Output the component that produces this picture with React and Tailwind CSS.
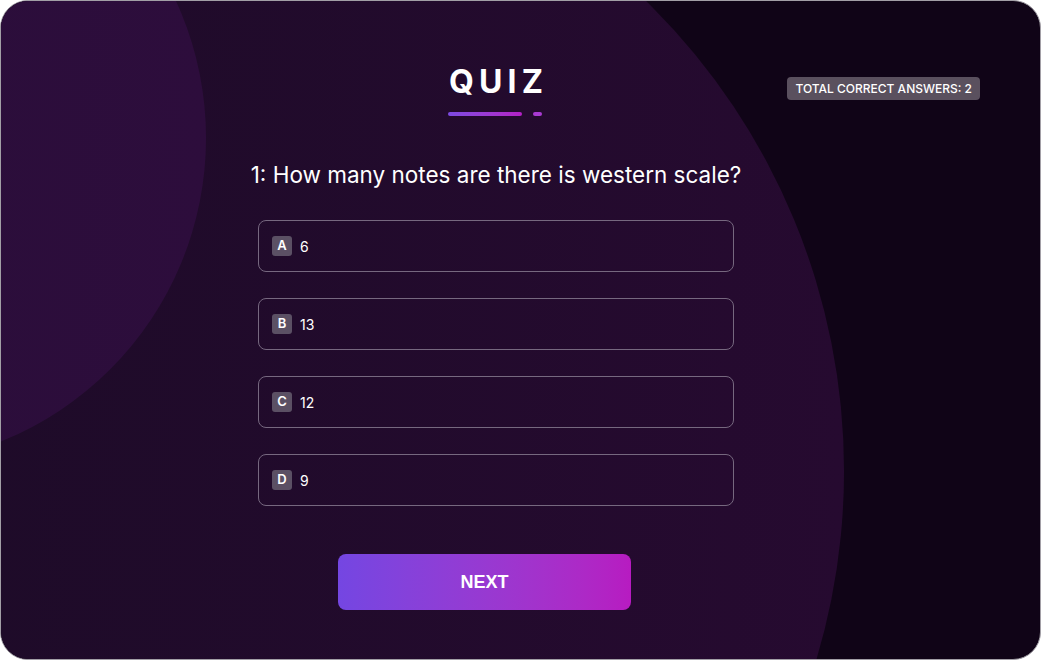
import React from 'react'

const options = [
  { key: 'A', text: '6' },
  { key: 'B', text: '13' },
  { key: 'C', text: '12' },
  { key: 'D', text: '9' },
]

export default function App() {
  return (
    <div className="w-[1041px] h-[660px] bg-white">
      <div
        className="relative w-[1041px] h-[660px] overflow-hidden rounded-[28px] border border-[#a29fa6] bg-[#100417]"
        style={{ fontFamily: 'Inter, "Noto Sans", sans-serif' }}
      >
        {/* background shapes */}
        <div className="absolute left-[-471px] top-[-187px] w-[1314px] h-[1314px] rounded-full bg-gradient-to-r from-[#1a0b25] to-[#260a30]" />
        <div className="absolute left-[-449px] top-[-190px] w-[654px] h-[654px] rounded-full bg-gradient-to-r from-[#280e38] to-[#2d0d3c]" />

        <div className="relative flex w-[990px] flex-col items-center pt-[61px]">
          <h1 className="text-[32px] font-bold leading-[40px] tracking-[0.16em] pl-[0.16em] text-white">QUIZ</h1>
          <div className="mt-[10px] flex items-center gap-[11px] pr-[2px]">
            <span className="h-[4px] w-[74px] rounded-full bg-gradient-to-r from-[#7c4ae2] to-[#b41ec6]" />
            <span className="h-[4px] w-[9px] rounded-full bg-[#a93ad2]" />
          </div>

          <h2 className="mt-[44px] text-[22.5px] font-normal leading-[30px] text-white">
            1: How many notes are there is western scale?
          </h2>

          <div className="mt-[30px] flex flex-col gap-[26px]">
            {options.map((o) => (
              <div
                key={o.key}
                className="flex h-[52px] w-[476px] items-center gap-[8px] rounded-[8px] border border-[#76687f] px-[13px]"
              >
                <span className="flex h-[20px] w-[20px] items-center justify-center rounded-[3px] bg-[#5b5064] text-[13px] font-semibold text-white">
                  {o.key}
                </span>
                <span className="text-[14px] text-white">{o.text}</span>
              </div>
            ))}
          </div>

          <button
            className="mt-[48px] mr-[23px] h-[56px] w-[293px] rounded-[8px] bg-gradient-to-r from-[#7446e2] to-[#b71bc1] text-[18px] font-bold text-white"
            style={{ fontFamily: '"Liberation Sans", Arial, sans-serif' }}
          >
            NEXT
          </button>
        </div>

        <div className="absolute right-[60px] top-[76px] flex h-[23px] items-center rounded-[4px] bg-[#5a505e] px-[8px] text-[12px] font-medium tracking-normal text-white">
          TOTAL CORRECT ANSWERS: 2
        </div>
      </div>
    </div>
  )
}
